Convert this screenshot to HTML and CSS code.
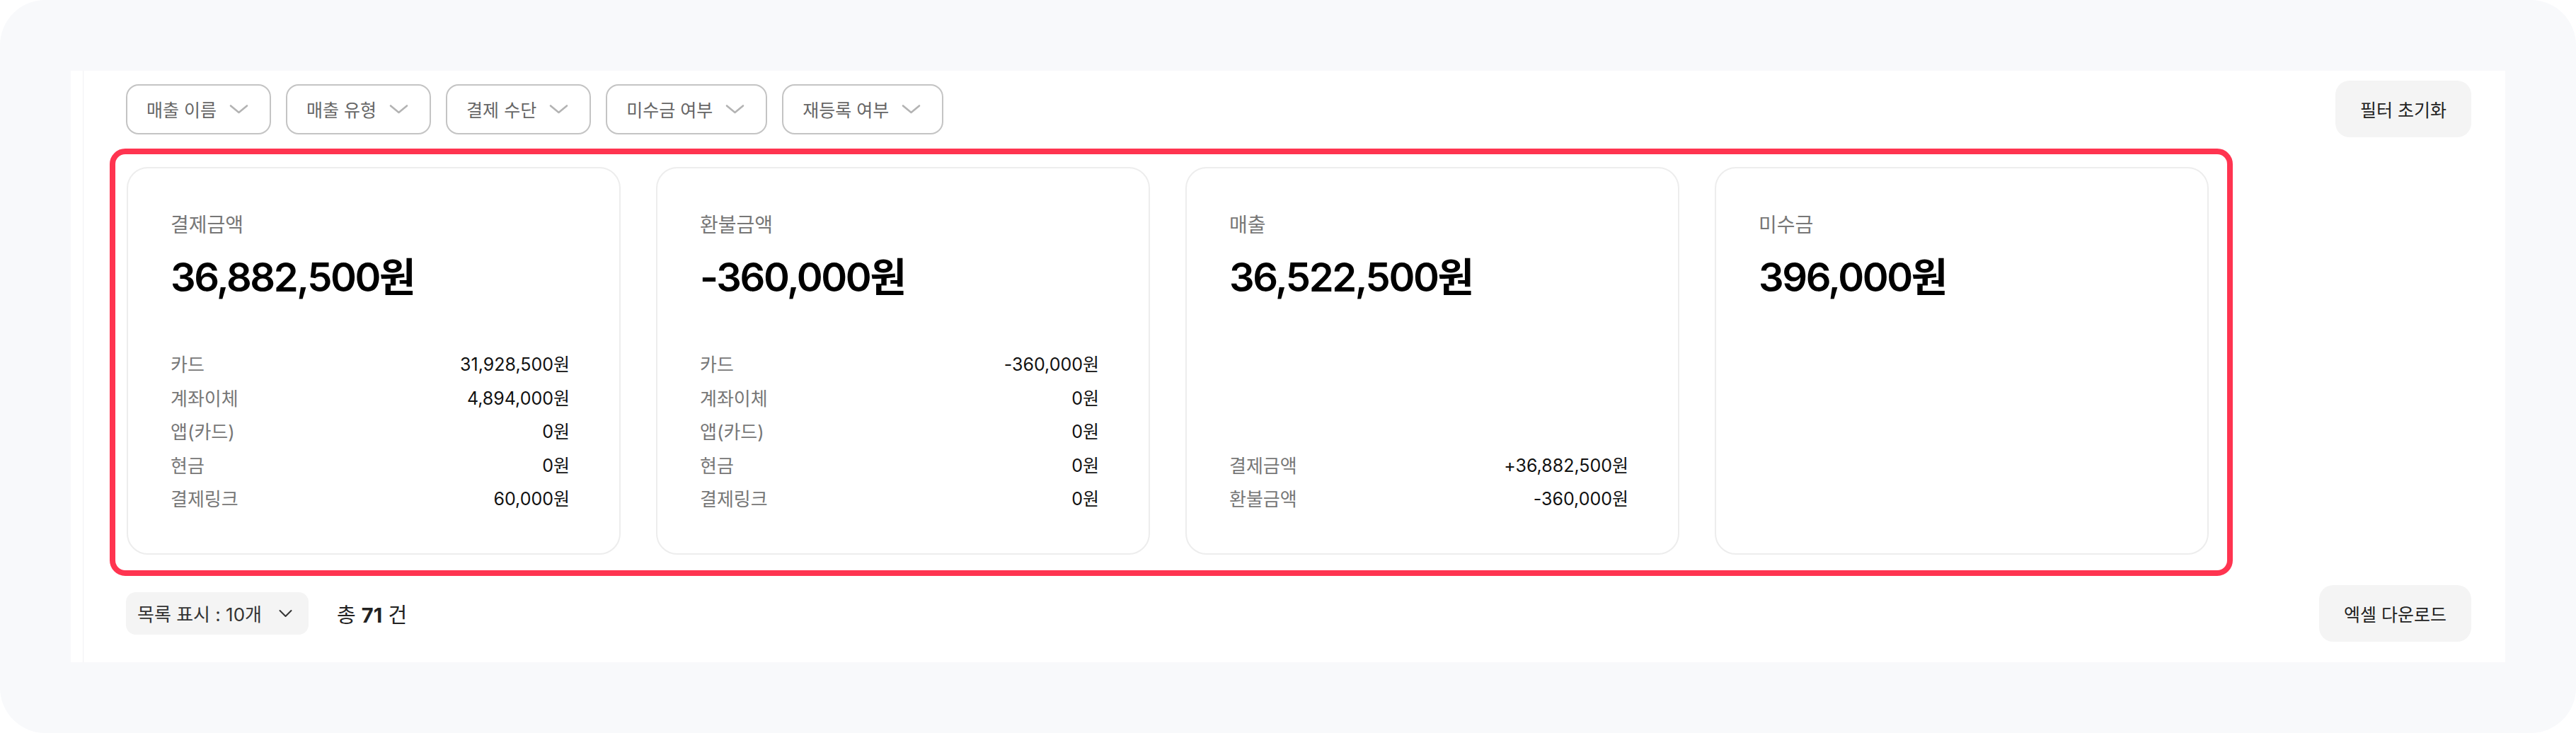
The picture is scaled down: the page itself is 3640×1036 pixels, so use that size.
FILE: index.html
```html
<!DOCTYPE html>
<html lang="ko">
<head>
<meta charset="utf-8">
<title>매출 요약</title>
<link rel="stylesheet" href="styles.css">
</head>
<body>
<div class="frame">
  <div class="panel">
    <div class="inner">
      <div class="toolbar">
        <div class="filters">
          <button class="chip"><span>매출 이름</span><svg class="chev" viewBox="0 0 27 14"><path d="M2 2.5 L13.5 12 L25 2.5"/></svg></button>
          <button class="chip"><span>매출 유형</span><svg class="chev" viewBox="0 0 27 14"><path d="M2 2.5 L13.5 12 L25 2.5"/></svg></button>
          <button class="chip"><span>결제 수단</span><svg class="chev" viewBox="0 0 27 14"><path d="M2 2.5 L13.5 12 L25 2.5"/></svg></button>
          <button class="chip"><span>미수금 여부</span><svg class="chev" viewBox="0 0 27 14"><path d="M2 2.5 L13.5 12 L25 2.5"/></svg></button>
          <button class="chip"><span>재등록 여부</span><svg class="chev" viewBox="0 0 27 14"><path d="M2 2.5 L13.5 12 L25 2.5"/></svg></button>
        </div>
        <button class="btn">필터 초기화</button>
      </div>

      <div class="highlight">
        <div class="cards">
          <div class="card">
            <div class="card-title">결제금액</div>
            <div class="amount">36,882,500원</div>
            <ul class="rows">
              <li><span class="label">카드</span><span class="value">31,928,500원</span></li>
              <li><span class="label">계좌이체</span><span class="value">4,894,000원</span></li>
              <li><span class="label">앱(카드)</span><span class="value">0원</span></li>
              <li><span class="label">현금</span><span class="value">0원</span></li>
              <li><span class="label">결제링크</span><span class="value">60,000원</span></li>
            </ul>
          </div>
          <div class="card">
            <div class="card-title">환불금액</div>
            <div class="amount">-360,000원</div>
            <ul class="rows">
              <li><span class="label">카드</span><span class="value">-360,000원</span></li>
              <li><span class="label">계좌이체</span><span class="value">0원</span></li>
              <li><span class="label">앱(카드)</span><span class="value">0원</span></li>
              <li><span class="label">현금</span><span class="value">0원</span></li>
              <li><span class="label">결제링크</span><span class="value">0원</span></li>
            </ul>
          </div>
          <div class="card">
            <div class="card-title">매출</div>
            <div class="amount">36,522,500원</div>
            <ul class="rows">
              <li><span class="label">결제금액</span><span class="value">+36,882,500원</span></li>
              <li><span class="label">환불금액</span><span class="value">-360,000원</span></li>
            </ul>
          </div>
          <div class="card">
            <div class="card-title">미수금</div>
            <div class="amount">396,000원</div>
          </div>
        </div>
      </div>

      <div class="footer">
        <div class="footer-left">
          <button class="pager"><span>목록 표시 : 10개</span><svg class="chev dark" viewBox="0 0 20 12"><path d="M2 2 L10 10 L18 2"/></svg></button>
          <span class="total">총 <b>71</b> 건</span>
        </div>
        <button class="btn">엑셀 다운로드</button>
      </div>
    </div>
  </div>
</div>
</body>
</html>
```

FILE: styles.css
```css
* { box-sizing: border-box; }

html, body {
  margin: 0;
  padding: 0;
  background: #ffffff;
}

body {
  font-family: "Inter", "Noto Sans CJK KR", sans-serif;
  color: #111;
}

button {
  font-family: inherit;
  border: none;
  cursor: pointer;
  margin: 0;
}

.frame {
  width: 3640px;
  height: 1036px;
  background: #f8f9fb;
  border-radius: 64px;
  padding: 100px;
}

.panel {
  background: #ffffff;
  height: 836px;
  padding: 0 48px 0 17px;
}

.inner {
  height: 100%;
  border-left: 1px solid #f1f1f3;
  padding-left: 60px;
  display: flex;
  flex-direction: column;
}

.toolbar {
  display: flex;
  justify-content: space-between;
  align-items: center;
  padding-top: 14px;
  height: 94px;
}

.filters {
  display: flex;
  gap: 21px;
}

.chip {
  height: 71px;
  display: flex;
  align-items: center;
  gap: 18px;
  padding: 0 30px 0 27px;
  background: #fff;
  border: 2px solid #c4c4c4;
  border-radius: 18px;
  font-size: 25px;
  color: #666;
}

.chev {
  width: 27px;
  height: 14px;
  fill: none;
  stroke: #b3b3b3;
  stroke-width: 2.6;
  stroke-linecap: round;
  stroke-linejoin: round;
}

.chev.dark {
  stroke: #333;
  stroke-width: 2;
  width: 21px;
  height: 12px;
}

.btn {
  height: 80px;
  padding: 0 35px;
  background: #f4f4f4;
  border-radius: 20px;
  font-size: 25px;
  color: #222;
}

.highlight {
  align-self: flex-start;
  margin: 16px 0 0 -23px;
  border: 8px solid #ff3450;
  border-radius: 22px;
  padding: 18px 26px 22px 16px;
}

.cards {
  display: flex;
  gap: 50px;
}

.card {
  width: 698px;
  border: 2px solid #ededed;
  border-radius: 30px;
  padding: 62px 70px 52px 60px;
  display: flex;
  flex-direction: column;
}

.card-title {
  font-size: 28px;
  line-height: 36px;
  color: #777;
}

.amount {
  margin-top: 23px;
  font-size: 56px;
  line-height: 67px;
  font-weight: 600;
  letter-spacing: -2.4px;
  color: #000;
  margin-bottom: 66px;
}

.rows {
  list-style: none;
  margin: auto 0 0;
  padding: 0;
}

.rows li {
  display: flex;
  justify-content: space-between;
  align-items: center;
  height: 47.5px;
  line-height: 47.5px;
}

.label {
  font-size: 26px;
  color: #777;
}

.value {
  font-size: 25px;
  color: #111;
}

.footer {
  margin-top: 13px;
  height: 80px;
  display: flex;
  justify-content: space-between;
  align-items: center;
}

.footer-left {
  display: flex;
  align-items: center;
  gap: 40px;
}

.pager {
  height: 60px;
  display: flex;
  align-items: center;
  gap: 23px;
  padding: 0 22px 0 16px;
  background: #f4f4f4;
  border-radius: 14px;
  font-size: 26px;
  color: #333;
}

.total {
  font-size: 29px;
  color: #222;
}

.total b {
  font-weight: 700;
}
```
